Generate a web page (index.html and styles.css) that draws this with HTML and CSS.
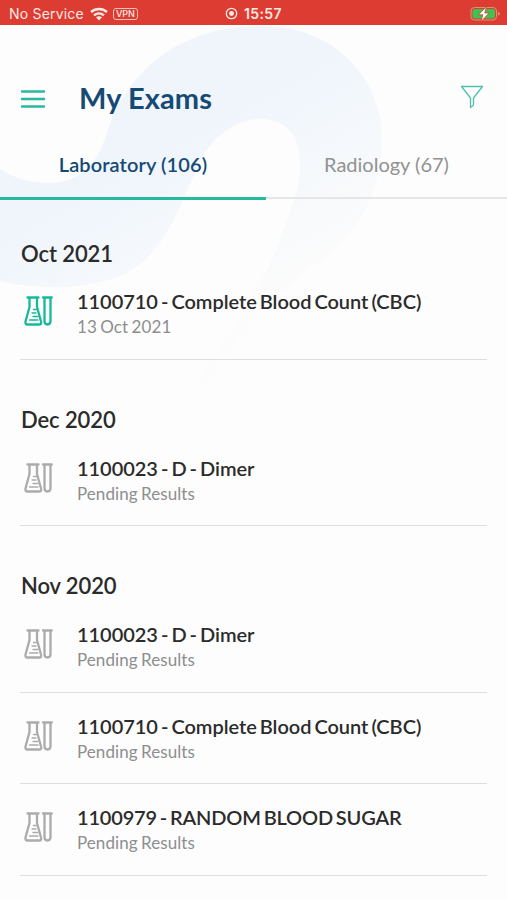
FILE: index.html
```html
<!DOCTYPE html>
<html lang="en">
<head>
    <meta charset="UTF-8">
    <meta name="viewport" content="width=device-width, initial-scale=1.0">
    <title>My Exams</title>
    <link rel="stylesheet" href="styles.css">
</head>
<body>
    <svg class="swoosh" viewBox="0 0 507 450">
        <defs>
            <linearGradient id="fade" gradientUnits="userSpaceOnUse" x1="250" y1="90" x2="345" y2="260">
                <stop offset="0" stop-color="#f0f5fc"/>
                <stop offset="0.4" stop-color="#f4f8fc"/>
                <stop offset="0.8" stop-color="#f9fafb"/>
                <stop offset="1" stop-color="#fcfcfc"/>
            </linearGradient>
        </defs>
        <path fill="url(#fade)" d="M0 169 C20 182 40 184 60 182 C88 176 98 158 106 136 C125 75 175 26 262 26 C335 26 382 78 382 140 C381 190 360 235 316 264 C285 285 240 330 190 400 C220 340 262 290 280 240 C294 203 302 180 300 158 C298 135 285 119 262 119 C235 119 214 136 202 158 C178 205 165 270 100 282 C65 290 30 288 0 281 Z"/>
    </svg>

    <div class="status-bar">
        <div class="status-left">
            <span class="carrier">No Service</span>
            <svg class="wifi" width="18" height="14" viewBox="0 0 18 14" fill="none" stroke="#fde9e4" stroke-width="2.4">
                <path d="M1 5 C5.500 0.900 12.500 0.900 17 5"/>
                <path d="M4 8.300 C7 5.700 11 5.700 14 8.300"/>
                <path fill="#fde9e4" stroke="none" d="M6 10.300 Q9 8 12 10.300 L9 13.500 Z"/>
            </svg>
            <span class="vpn">VPN</span>
        </div>
        <div class="status-time">
            <svg width="13" height="13" viewBox="0 0 13 13">
                <circle cx="6.500" cy="6.500" r="5.200" fill="none" stroke="#fde9e4" stroke-width="1.300"/>
                <circle cx="6.500" cy="6.500" r="2.400" fill="#fde9e4"/>
            </svg>
            <span>15:57</span>
        </div>
        <svg class="battery" width="31" height="16" viewBox="0 0 31 16">
            <rect x="1" y="1.500" width="25.500" height="12.500" rx="3.500" fill="none" stroke="#e0937a"/>
            <rect x="2.500" y="3" width="22.500" height="9.500" rx="2" fill="#3fc04f"/>
            <path fill="#e0937a" d="M28 6 Q30 6.300 30 7.800 Q30 9.300 28 9.600 Z"/>
            <path fill="#fff" stroke="#d93c31" stroke-width="0.800" d="M16.500 0.500 L8.500 8.800 H12.800 L11 15.500 L19.200 7 H14.800 Z"/>
        </svg>
    </div>

    <header class="header">
        <svg class="menu" width="26" height="20" viewBox="0 0 26 20" stroke="#27b99f" stroke-width="2.400" stroke-linecap="round">
            <path d="M2 2.500 H24 M2 10 H24 M2 17.500 H24"/>
        </svg>
        <h1>My Exams</h1>
        <svg class="filter" width="24" height="24" viewBox="0 0 24 24" fill="none" stroke="#4fc2ae" stroke-width="1.300" stroke-linejoin="round">
            <path d="M1.500 1.500 H22.500 L13.500 13 V20 L10.500 22.500 V13 Z"/>
        </svg>
    </header>

    <nav class="tabs">
        <a class="tab active">Laboratory (106)</a>
        <a class="tab">Radiology (67)</a>
    </nav>

    <!-- flask and test tube, shared by all rows -->
    <svg class="symbols">
        <symbol id="lab" viewBox="0 0 30 30">
            <g fill="none" stroke="currentColor" stroke-width="2.300" stroke-linejoin="round" stroke-linecap="round">
                <path d="M3.500 1.500 H14.500 M5.500 1.500 V11 L1.500 25.500 Q1 28.500 3.500 28.500 H15 Q18 28.500 17 25.500 L13 11 V1.500"/>
                <path d="M19 1.500 H27.800 M20.500 1.500 V25 Q20.500 28.500 23.500 28.500 Q26.500 28.500 26.500 25 V1.500"/>
                <path stroke-width="1.300" d="M9.500 13.500 H12.500 M8 17 H12 M9 20.500 H14 M5.500 24 H14"/>
            </g>
        </symbol>
    </svg>

    <main class="exams">
        <section>
            <h2>Oct 2021</h2>
            <div class="exam ready">
                <svg class="icon"><use href="#lab"/></svg>
                <div>
                    <h3>1100710 - Complete Blood Count (CBC)</h3>
                    <p>13 Oct 2021</p>
                </div>
            </div>
        </section>
        <section>
            <h2>Dec 2020</h2>
            <div class="exam">
                <svg class="icon"><use href="#lab"/></svg>
                <div>
                    <h3>1100023 - D - Dimer</h3>
                    <p>Pending Results</p>
                </div>
            </div>
        </section>
        <section>
            <h2>Nov 2020</h2>
            <div class="exam">
                <svg class="icon"><use href="#lab"/></svg>
                <div>
                    <h3>1100023 - D - Dimer</h3>
                    <p>Pending Results</p>
                </div>
            </div>
            <div class="exam">
                <svg class="icon"><use href="#lab"/></svg>
                <div>
                    <h3>1100710 - Complete Blood Count (CBC)</h3>
                    <p>Pending Results</p>
                </div>
            </div>
            <div class="exam">
                <svg class="icon"><use href="#lab"/></svg>
                <div>
                    <h3 class="caps">1100979 - RANDOM BLOOD SUGAR</h3>
                    <p>Pending Results</p>
                </div>
            </div>
        </section>
    </main>
</body>
</html>
```

FILE: styles.css
```css
* {
    box-sizing: border-box;
}
body {
    margin: 0;
    height: 900px;
    overflow: hidden;
    position: relative;
    background-color: #fdfdfd;
    font-family: Lato, sans-serif;
    color: #2b2b2b;
}
h1, h2, h3, p {
    margin: 0;
}
.swoosh {
    position: absolute;
    top: 0;
    left: 0;
    width: 507px;
    height: 450px;
    z-index: -1;
}
.symbols {
    display: none;
}
.status-bar {
    display: grid;
    grid-template-columns: 1fr auto 1fr;
    align-items: center;
    height: 25px;
    padding: 2px 6px 0 9px;
    background-color: #dc3c32;
    color: #fde9e4;
    font-family: Inter, sans-serif;
    font-size: 14px;
}
.status-left,
.status-time {
    display: flex;
    align-items: center;
}
.carrier {
    letter-spacing: 0.2px;
}
.wifi {
    margin: 0 5px 0 6px;
}
.vpn {
    width: 25px;
    height: 12px;
    border: 1px solid #f5c2b8;
    border-radius: 3px;
    font-size: 9px;
    font-weight: 500;
    line-height: 10px;
    text-align: center;
}
.status-time {
    gap: 6px;
    margin-right: 3px;
    font-weight: 600;
    letter-spacing: 0.4px;
}
.battery {
    justify-self: end;
}
.header {
    display: flex;
    align-items: center;
    height: 107px;
    padding: 41px 23px 0 20px;
}
.header h1 {
    flex: 1;
    margin: -3px 0 0 33px;
    color: #154a75;
    font-size: 29px;
    font-weight: 700;
    letter-spacing: 0.1px;
}
.filter {
    margin-top: -5px;
}
.tabs {
    display: flex;
    height: 67px;
    border-bottom: 2px solid #e6e6e6;
}
.tab {
    flex: 241;
    padding-top: 20px;
    color: #929292;
    font-size: 20px;
    line-height: 24px;
    text-align: center;
}
.tab.active {
    flex: 266;
    height: 68px;
    border-bottom: 3px solid #27b99f;
    color: #154a75;
    font-weight: 600;
    letter-spacing: 0.1px;
}
.exams {
    padding: 0 20px;
}
section h2 {
    height: 74.600px;
    padding-top: 47px;
    padding-left: 1px;
    font-size: 22px;
    font-weight: 600;
    line-height: 26px;
    letter-spacing: -0.1px;
}
section:first-child h2 {
    height: 69.400px;
    padding-top: 42px;
}
.exam {
    display: flex;
    height: 91.700px;
    padding-top: 21px;
    border-bottom: 1px solid #dedede;
}
.icon {
    width: 30px;
    height: 30px;
    margin: 7px 23px 0 4px;
    color: #ababab;
}
.ready .icon {
    color: #18b99b;
}
.exam h3 {
    font-size: 20px;
    font-weight: 600;
    line-height: 24px;
    letter-spacing: -0.04px;
    word-spacing: -1.900px;
}
.exam h3.caps {
    letter-spacing: -0.18px;
}
.exam p {
    margin-top: 2px;
    color: #8e8e8e;
    font-size: 17px;
    line-height: 24px;
    letter-spacing: 0.07px;
    word-spacing: -1px;
}
```
